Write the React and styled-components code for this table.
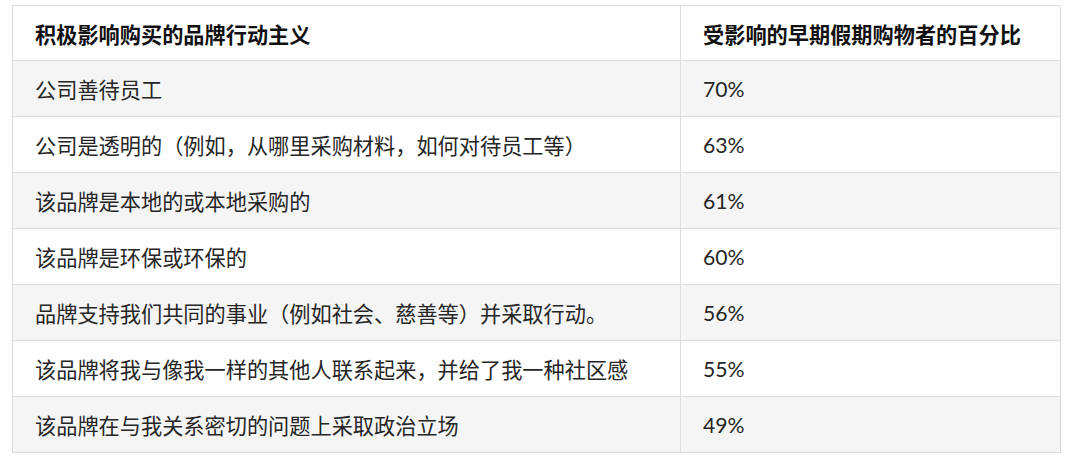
import React from "react";
import styled, { createGlobalStyle } from "styled-components";

const GlobalStyle = createGlobalStyle`
  html, body {
    margin: 0;
    padding: 0;
    background: #ffffff;
  }
  body {
    font-family: Lato, "Noto Sans CJK SC", sans-serif;
  }
`;

const Page = styled.div`
  padding: 5px 0 0 12px;
`;

const Table = styled.div`
  width: 1049px;
  box-sizing: border-box;
  border: 1px solid #dcdcdc;
`;

const Row = styled.div`
  display: grid;
  grid-template-columns: 668px 1fr;
  height: ${(p) => (p.$header ? "54px" : "55px")};
  background: ${(p) => (p.$shaded ? "#f5f5f5" : "#ffffff")};
  border-top: ${(p) => (p.$header ? "none" : "1px solid #dcdcdc")};
`;

const Cell = styled.div`
  display: flex;
  align-items: center;
  padding: 0 22px;
  box-sizing: border-box;
  font-size: 21.2px;
  color: ${(p) => (p.$header ? "#111111" : "#262626")};
  font-weight: ${(p) => (p.$header ? 700 : 400)};
  white-space: nowrap;
  border-right: ${(p) => (p.$first ? "1px solid #dcdcdc" : "none")};
`;

const rows = [
  ["公司善待员工", "70%"],
  ["公司是透明的（例如，从哪里采购材料，如何对待员工等）", "63%"],
  ["该品牌是本地的或本地采购的", "61%"],
  ["该品牌是环保或环保的", "60%"],
  ["品牌支持我们共同的事业（例如社会、慈善等）并采取行动。", "56%"],
  ["该品牌将我与像我一样的其他人联系起来，并给了我一种社区感", "55%"],
  ["该品牌在与我关系密切的问题上采取政治立场", "49%"],
];

export default function App() {
  return (
    <>
      <GlobalStyle />
      <Page>
        <Table>
          <Row $header>
            <Cell $header $first>积极影响购买的品牌行动主义</Cell>
            <Cell $header>受影响的早期假期购物者的百分比</Cell>
          </Row>
          {rows.map(([label, value], i) => (
            <Row key={label} $shaded={i % 2 === 0}>
              <Cell $first>{label}</Cell>
              <Cell>{value}</Cell>
            </Row>
          ))}
        </Table>
      </Page>
    </>
  );
}
